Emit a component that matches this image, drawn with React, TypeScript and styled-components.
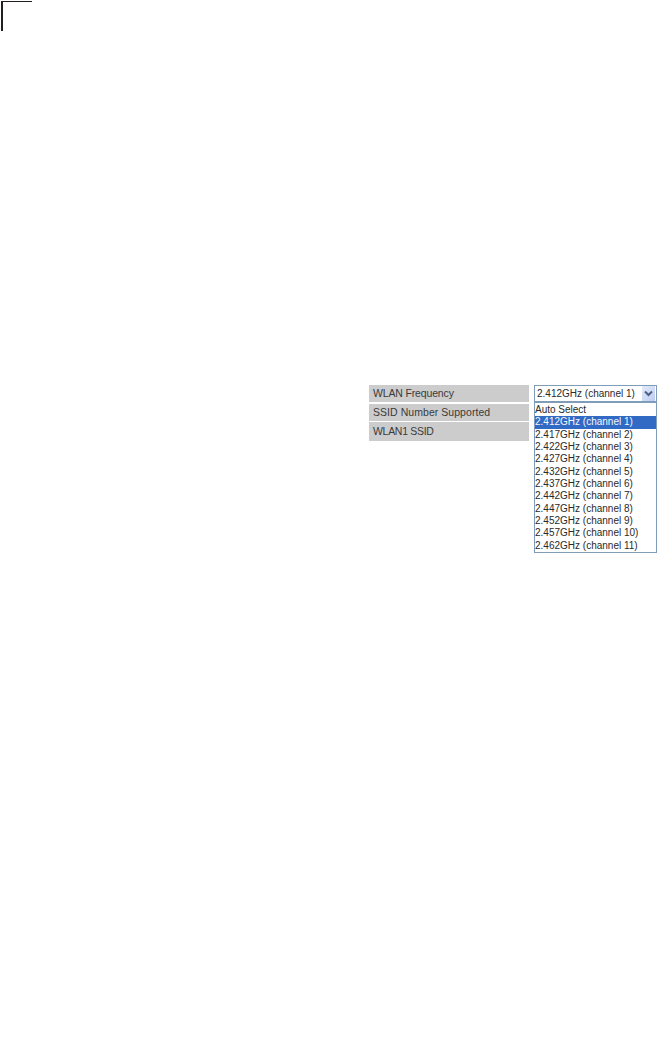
import React from "react";
import styled, { createGlobalStyle } from "styled-components";

const Global = createGlobalStyle`
  html, body { margin: 0; padding: 0; background: #fff; }
  body { font-family: "Liberation Sans", Arial, sans-serif; width: 657px; height: 1054px; overflow: hidden; }
`;

const Page = styled.div`
  width: 657px;
  height: 1054px;
  padding-top: 1px;
  padding-left: 1px;
  box-sizing: border-box;
`;

const CropMark = styled.div`
  width: 31px;
  height: 30px;
  box-sizing: border-box;
  border-top: 1px solid #231f20;
  border-left: 2px solid #231f20;
`;

const Figure = styled.div`
  margin-top: 354px;
  margin-left: 368px;
  display: grid;
  grid-template-columns: 160px 123px;
  column-gap: 5px;
  align-items: start;
`;

const Labels = styled.div`
  display: flex;
  flex-direction: column;
  gap: 1.5px;
`;

const Label = styled.div<{ $h: number; $ls: number }>`
  height: ${(p) => p.$h}px;
  box-sizing: border-box;
  background: #cccccc;
  padding: 0 0 1px 4px;
  display: flex;
  align-items: center;
  font-size: 10.5px;
  letter-spacing: ${(p) => p.$ls}px;
  color: #3a3a3a;
  white-space: nowrap;
`;

const SelectBox = styled.div`
  height: 17px;
  box-sizing: border-box;
  border: 1px solid #7f9db9;
  display: flex;
  align-items: center;
  justify-content: space-between;
  padding: 0 1px 0 2px;
  font-size: 10px;
  color: #2a2a2a;
  white-space: nowrap;
`;

const Arrow = styled.div`
  width: 13px;
  height: 15px;
  background: linear-gradient(135deg, #e3ebfb, #bccdf2);
  display: flex;
  align-items: center;
  justify-content: center;
`;

const List = styled.div`
  height: 151px;
  box-sizing: border-box;
  border: 1px solid #7f9db9;
  padding-top: 1px;
  display: flex;
  flex-direction: column;
  font-size: 10px;
`;

const Option = styled.div<{ $sel?: boolean }>`
  height: 12.33px;
  line-height: 12.33px;
  white-space: nowrap;
  background: ${(p) => (p.$sel ? "#316ac5" : "transparent")};
  color: ${(p) => (p.$sel ? "#f4f6fb" : "#2a2a2a")};
`;

const options = [
  "Auto Select",
  "2.412GHz (channel 1)",
  "2.417GHz (channel 2)",
  "2.422GHz (channel 3)",
  "2.427GHz (channel 4)",
  "2.432GHz (channel 5)",
  "2.437GHz (channel 6)",
  "2.442GHz (channel 7)",
  "2.447GHz (channel 8)",
  "2.452GHz (channel 9)",
  "2.457GHz (channel 10)",
  "2.462GHz (channel 11)",
];

export default function App() {
  return (
    <Page>
      <Global />
      <CropMark />
      <Figure>
        <Labels>
          <Label $h={17} $ls={-0.15}>WLAN Frequency</Label>
          <Label $h={17} $ls={0.05}>SSID Number Supported</Label>
          <Label $h={19} $ls={-0.3}>WLAN1 SSID</Label>
        </Labels>
        <div>
          <SelectBox>
            <span>2.412GHz (channel 1)</span>
            <Arrow>
              <svg width="9" height="7" viewBox="0 0 9 7">
                <path d="M1 1.5 L4.5 5 L8 1.5" fill="none" stroke="#4d6185" strokeWidth="2" />
              </svg>
            </Arrow>
          </SelectBox>
          <List>
            {options.map((o, i) => (
              <Option key={o} $sel={i === 1}>
                {o}
              </Option>
            ))}
          </List>
        </div>
      </Figure>
    </Page>
  );
}
